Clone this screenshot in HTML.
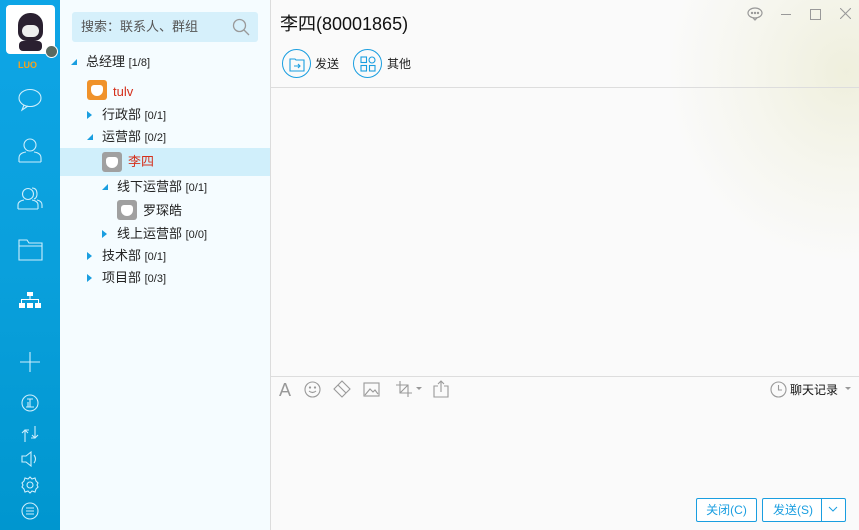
<!DOCTYPE html>
<html><head><meta charset="utf-8"><style>
*{margin:0;padding:0;box-sizing:border-box}
body{width:859px;height:530px;overflow:hidden;position:relative;font-family:"Liberation Sans","Noto Sans CJK SC",sans-serif;font-size:12px;color:#222;background:#fafafa}
.side{position:absolute;left:0;top:0;width:60px;height:530px;background:linear-gradient(#0ea5e6,#0aa0dc 50%,#0096cf)}
.tree{position:absolute;left:60px;top:0;width:211px;height:530px;background:#f5fcff;border-right:1px solid #dcdcdc}
.chat{position:absolute;left:271px;top:0;right:0;height:530px;background:#fafafa;overflow:hidden}
.ab{position:absolute}
.row{position:absolute;left:0;width:210px;height:23px;line-height:23px;font-size:13px}
.row small{font-size:11px}
.tri{position:absolute;width:0;height:0}
.td{border-left:6px solid transparent;border-bottom:6px solid #1a9ee0;top:9px}
.tr{border-top:4px solid transparent;border-bottom:4px solid transparent;border-left:5px solid #1a9ee0;top:8px}
.av{position:absolute;width:20px;height:20px;border-radius:3px;top:1px}
.av:after{content:"";position:absolute;left:4px;top:5px;width:12px;height:11px;background:#fff;border-radius:3px 3px 6px 6px}
.btn{position:absolute;height:24px;border:1px solid #1a9ee0;border-radius:2px;color:#1a9ee0;font-size:12px;line-height:22px;text-align:center;background:#fff}
svg{position:absolute}
</style></head><body>
<div class="side">
 <div class="ab" style="left:6px;top:5px;width:49px;height:49px;background:#fff;border-radius:4px;overflow:hidden">
  <div class="ab" style="left:12px;top:8px;width:25px;height:28px;background:#2a2030;border-radius:12px 12px 9px 9px"></div>
  <div class="ab" style="left:16px;top:20px;width:17px;height:12px;background:#eee;border-radius:6px"></div>
  <div class="ab" style="left:13px;top:36px;width:23px;height:10px;background:#2a2030;border-radius:4px"></div>
 </div>
 <div class="ab" style="left:45px;top:45px;width:13px;height:13px;border-radius:50%;background:#5a6a60;border:1px solid #fff"></div>
 <div class="ab" style="left:18px;top:60px;font-size:9px;font-weight:bold;color:#f7a21b">LUO</div>
 <svg style="left:17px;top:88px" width="26" height="24" viewBox="0 0 26 24" fill="none" stroke="#cdeefc" stroke-width="1.1"><ellipse cx="13" cy="10" rx="11" ry="8.5"/><path d="M7 17 L5 22 L11 18"/></svg>
 <svg style="left:18px;top:137px" width="24" height="26" viewBox="0 0 24 26" fill="none" stroke="#cdeefc" stroke-width="1.1"><circle cx="12" cy="8" r="6"/><path d="M1 25 V21 Q1 16 8 15 M23 25 V21 Q23 16 16 15 M1 25 H23"/></svg>
 <svg style="left:17px;top:185px" width="26" height="26" viewBox="0 0 26 26" fill="none" stroke="#cdeefc" stroke-width="1.1"><circle cx="11" cy="9" r="5.5"/><path d="M1 24 V20 Q1 16 7 15 M21 24 V20 Q21 16 15 15 M1 24 H21 M15 3 Q20 3 20 9 Q20 13 17 14 M20 15 Q25 16 25 20 V23"/></svg>
 <svg style="left:18px;top:239px" width="25" height="22" viewBox="0 0 25 22" fill="none" stroke="#cdeefc" stroke-width="1.1"><path d="M1 1 H9 L11 4 H24 V21 H1 Z M1 7 H24"/></svg>
 <svg style="left:18px;top:292px" width="24" height="20" viewBox="0 0 24 20" fill="#fff"><rect x="9" y="0" width="6" height="4"/><rect x="11.5" y="4" width="1" height="4"/><rect x="3" y="7" width="18" height="1"/><rect x="3" y="7" width="1" height="4"/><rect x="20" y="7" width="1" height="4"/><rect x="1" y="11" width="6" height="5"/><rect x="9" y="11" width="6" height="5"/><rect x="17" y="11" width="6" height="5"/></svg>
 <svg style="left:20px;top:352px" width="20" height="20" viewBox="0 0 20 20" stroke="#cdeefc" stroke-width="1.1"><path d="M10 0 V20 M0 10 H20"/></svg>
 <svg style="left:21px;top:394px" width="18" height="18" viewBox="0 0 18 18" fill="none" stroke="#cdeefc" stroke-width="1.1"><circle cx="9" cy="9" r="8"/><path d="M6 5 H12 M9 5 V13 M5 13 H13 M7 8 V13"/></svg>
 <svg style="left:21px;top:425px" width="18" height="18" viewBox="0 0 18 18" fill="none" stroke="#cdeefc" stroke-width="1.1"><path d="M4 17 V5 H8 M1 8 L4 5 L7 8 M14 1 V13 H10 M11 10 L14 13 L17 10"/></svg>
 <svg style="left:21px;top:450px" width="18" height="18" viewBox="0 0 18 18" fill="none" stroke="#cdeefc" stroke-width="1.1"><path d="M1 6 H5 L10 2 V16 L5 12 H1 Z M13 5 Q16 9 13 13"/></svg>
 <svg style="left:21px;top:476px" width="18" height="18" viewBox="0 0 18 18" fill="none" stroke="#cdeefc" stroke-width="1.1"><circle cx="9" cy="9" r="3"/><path d="M9 1 L11 3 L14 2 L15 5 L17 7 L16 9 L17 11 L15 13 L14 16 L11 15 L9 17 L7 15 L4 16 L3 13 L1 11 L2 9 L1 7 L3 5 L4 2 L7 3 Z"/></svg>
 <svg style="left:21px;top:502px" width="18" height="18" viewBox="0 0 18 18" fill="none" stroke="#cdeefc" stroke-width="1.1"><circle cx="9" cy="9" r="8"/><path d="M5 6 H13 M5 9 H13 M5 12 H13"/></svg>
</div>
<div class="tree">
 <div class="ab" style="left:12px;top:12px;width:186px;height:30px;background:#d6f0fb;border-radius:3px;color:#555;font-size:13px;line-height:30px;padding-left:9px">搜索：联系人、群组</div>
 <svg style="left:172px;top:18px" width="18" height="18" viewBox="0 0 18 18" fill="none" stroke="#999" stroke-width="1.3"><circle cx="7.5" cy="7.5" r="6"/><path d="M12 12 L17 17"/></svg>
 <div class="row" style="top:50px"><span class="tri td" style="left:11px"></span><span style="position:absolute;left:26px">总经理 <small>[1/8]</small></span></div>
 <div class="row" style="top:79px"><span class="av" style="left:27px;background:#f0922a"></span><span style="position:absolute;left:53px;color:#d4301c;top:1px">tulv</span></div>
 <div class="row" style="top:103px"><span class="tri tr" style="left:27px"></span><span style="position:absolute;left:42px">行政部 <small>[0/1]</small></span></div>
 <div class="row" style="top:125px"><span class="tri td" style="left:27px"></span><span style="position:absolute;left:42px">运营部 <small>[0/2]</small></span></div>
 <div class="row" style="top:148px;background:#d0effb;height:28px"><span class="av" style="left:42px;top:4px;background:#a0a0a0"></span><span style="position:absolute;left:68px;color:#d4301c;top:2px">李四</span></div>
 <div class="row" style="top:175px"><span class="tri td" style="left:42px"></span><span style="position:absolute;left:57px">线下运营部 <small>[0/1]</small></span></div>
 <div class="row" style="top:199px"><span class="av" style="left:57px;background:#a0a0a0"></span><span style="position:absolute;left:83px">罗琛皓</span></div>
 <div class="row" style="top:222px"><span class="tri tr" style="left:42px"></span><span style="position:absolute;left:57px">线上运营部 <small>[0/0]</small></span></div>
 <div class="row" style="top:244px"><span class="tri tr" style="left:27px"></span><span style="position:absolute;left:42px">技术部 <small>[0/1]</small></span></div>
 <div class="row" style="top:266px"><span class="tri tr" style="left:27px"></span><span style="position:absolute;left:42px">项目部 <small>[0/3]</small></span></div>
</div>
<div class="chat">
 <div class="ab" style="left:380px;top:-40px;width:260px;height:320px;background:radial-gradient(ellipse at 75% 35%,rgba(238,238,218,.9) 0,rgba(243,243,230,.6) 35%,rgba(250,250,250,0) 65%)"></div>
 <div class="ab" style="left:9px;top:10px;font-size:18px;color:#111">李四(80001865)</div>
 <svg style="left:476px;top:7px" width="16" height="14" viewBox="0 0 16 14" fill="none" stroke="#999" stroke-width="1.2"><ellipse cx="8" cy="6" rx="7" ry="5"/><path d="M6 11 L8 13 L10 11"/><circle cx="5" cy="6" r=".6" fill="#999"/><circle cx="8" cy="6" r=".6" fill="#999"/><circle cx="11" cy="6" r=".6" fill="#999"/></svg>
 <div class="ab" style="left:510px;top:14px;width:10px;height:1px;background:#999"></div>
 <div class="ab" style="left:539px;top:9px;width:11px;height:11px;border:1px solid #999"></div>
 <svg style="left:569px;top:8px" width="11" height="11" viewBox="0 0 11 11" stroke="#999" stroke-width="1.1"><path d="M0 0 L11 11 M11 0 L0 11"/></svg>
 <div class="ab" style="left:11px;top:49px;width:29px;height:29px;border:1px solid #1a9ee0;border-radius:50%"></div>
 <svg style="left:18px;top:56px" width="16" height="16" viewBox="0 0 16 16" fill="none" stroke="#1a9ee0" stroke-width="1.1"><path d="M1 3 H6 L7 4 H15 V15 H1 Z M5 10 H11 M9 8 L11 10 L9 12"/></svg>
 <div class="ab" style="left:44px;top:55px;font-size:12px">发送</div>
 <div class="ab" style="left:82px;top:49px;width:29px;height:29px;border:1px solid #1a9ee0;border-radius:50%"></div>
 <svg style="left:89px;top:56px" width="16" height="16" viewBox="0 0 16 16" fill="none" stroke="#1a9ee0" stroke-width="1.1"><rect x="1" y="1" width="5.5" height="5.5"/><circle cx="12" cy="4" r="3"/><rect x="1" y="9.5" width="5.5" height="5.5"/><rect x="9.5" y="9.5" width="5.5" height="5.5"/></svg>
 <div class="ab" style="left:116px;top:55px;font-size:12px">其他</div>
 <div class="ab" style="left:0;top:87px;right:0;height:1px;background:#ddd"></div>
 <div class="ab" style="left:0;top:376px;right:0;height:1px;background:#ddd"></div>
 <div class="ab" style="left:8px;top:380px;font-size:18px;color:#999">A</div>
 <svg style="left:33px;top:381px" width="17" height="17" viewBox="0 0 17 17" fill="none" stroke="#999" stroke-width="1.1"><circle cx="8.5" cy="8.5" r="7.5"/><path d="M5 10 Q8.5 13 12 10"/><circle cx="6" cy="6.5" r=".6"/><circle cx="11" cy="6.5" r=".6"/></svg>
 <svg style="left:62px;top:380px" width="18" height="18" viewBox="0 0 18 18" fill="none" stroke="#999" stroke-width="1.1"><path d="M9 1 L17 9 L9 17 L1 9 Z M5 5 L13 13"/></svg>
 <svg style="left:92px;top:382px" width="17" height="15" viewBox="0 0 17 15" fill="none" stroke="#999" stroke-width="1.1"><rect x="1" y="1" width="15" height="13"/><path d="M2 13 L7 7 L10 10 L12 8 L15 12"/></svg>
 <svg style="left:125px;top:381px" width="16" height="16" viewBox="0 0 16 16" fill="none" stroke="#999" stroke-width="1.1"><path d="M4 0 V12 H16 M0 4 H12 V16 M4 12 L12 4"/></svg>
 <div class="ab" style="left:145px;top:387px;border-left:3px solid transparent;border-right:3px solid transparent;border-top:3px solid #999"></div>
 <svg style="left:162px;top:380px" width="16" height="18" viewBox="0 0 16 18" fill="none" stroke="#999" stroke-width="1.1"><path d="M5 6 H1 V17 H15 V6 H11 M8 12 V1 M5 4 L8 1 L11 4"/></svg>
 <svg style="left:499px;top:381px" width="17" height="17" viewBox="0 0 17 17" fill="none" stroke="#999" stroke-width="1.1"><circle cx="8.5" cy="8.5" r="7.5"/><path d="M8.5 4 V9 H12"/></svg>
 <div class="ab" style="left:519px;top:381px;font-size:12px;color:#111">聊天记录</div>
 <div class="ab" style="left:574px;top:387px;border-left:3px solid transparent;border-right:3px solid transparent;border-top:3px solid #999"></div>
 <div class="btn" style="left:425px;top:498px;width:61px">关闭(C)</div>
 <div class="btn" style="left:491px;top:498px;width:84px;text-align:left;padding-left:10px">发送(S)</div>
 <div class="ab" style="left:550px;top:499px;width:1px;height:22px;background:#1a9ee0"></div>
 <svg style="left:557px;top:506px" width="10" height="6" viewBox="0 0 10 6" fill="none" stroke="#1a9ee0"><path d="M1 1 L5 5 L9 1"/></svg>
</div>
</body></html>
